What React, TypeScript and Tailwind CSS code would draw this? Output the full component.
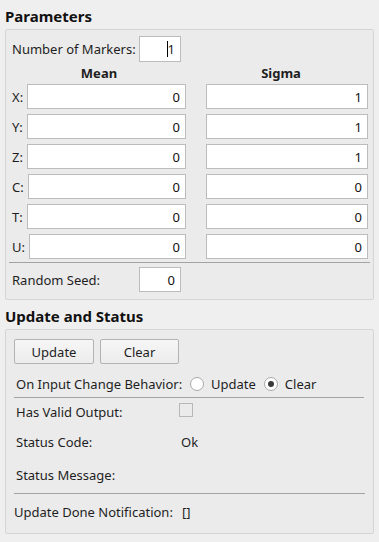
const font = { fontFamily: '"Noto Sans", "Open Sans", sans-serif' };

function NumBox({ value, className = "" }: { value: string; className?: string }) {
  return (
    <div
      className={`flex h-[25px] items-center justify-end border border-[#bcbcbc] bg-white pr-[5px] text-[13px] text-[#111] ${className}`}
    >
      {value}
    </div>
  );
}

function Separator({ className = "" }: { className?: string }) {
  return <div className={`h-px bg-[#a3a3a3] ${className}`} />;
}

function Radio({ label, checked }: { label: string; checked?: boolean }) {
  return (
    <span className="flex items-center gap-[7px]">
      <span className="flex h-[14px] w-[14px] items-center justify-center rounded-full border border-[#a9a9a9] bg-white">
        {checked && <span className="h-[6px] w-[6px] rounded-full bg-[#3a3a3a]" />}
      </span>
      <span>{label}</span>
    </span>
  );
}

const rows = [
  { axis: "X", mean: "0", sigma: "1" },
  { axis: "Y", mean: "0", sigma: "1" },
  { axis: "Z", mean: "0", sigma: "1" },
  { axis: "C", mean: "0", sigma: "0" },
  { axis: "T", mean: "0", sigma: "0" },
  { axis: "U", mean: "0", sigma: "0" },
];

export default function App() {
  return (
    <div
      style={font}
      className="flex h-[542px] w-[379px] flex-col bg-[#efefef] px-[5px] pt-[6px] text-[13px] leading-[20px] text-[#1e1e1e]"
    >
      <h2 className="h-[20px] text-[15px] font-bold leading-[20px] text-[#111]">Parameters</h2>
      <section className="mt-[3px] flex h-[271px] flex-col rounded-[2px] border border-[#d5d5d5] bg-[#ebebeb] pt-[6px]">
        <div className="flex h-[26px] items-center pl-[6px]">
          <span className="w-[127px]">Number of Markers:</span>
          <div className="flex h-[26px] w-[42px] items-center justify-end border border-[#bcbcbc] bg-white pr-[5px]">
            <span className="border-l border-black leading-[16px]">1</span>
          </div>
        </div>

        <div className="mt-[2px] grid grid-cols-2 gap-x-[8px] pl-[6px] pr-[5px]">
          <div className="h-[18px] text-center font-bold leading-[18px]">Mean</div>
          <div className="h-[18px] text-center font-bold leading-[18px]">Sigma</div>
        </div>

        <div className="mt-[2px] flex flex-col gap-[5px] pl-[6px] pr-[5px]">
          {rows.map((r) => (
            <div key={r.axis} className="grid grid-cols-2 gap-x-[8px]">
              <div className="flex items-center gap-[4px]">
                <span>{r.axis}:</span>
                <NumBox value={r.mean} className="flex-1" />
              </div>
              <NumBox value={r.sigma} className="ml-[12px]" />
            </div>
          ))}
        </div>

        <Separator className="mx-[3px] mt-[3px]" />

        <div className="mt-[4px] flex h-[25px] items-center pl-[6px]">
          <span className="w-[127px]">Random Seed:</span>
          <NumBox value="0" className="w-[42px]" />
        </div>
      </section>

      <h2 className="mt-[6px] h-[20px] text-[15px] font-bold leading-[20px] text-[#111]">
        Update and Status
      </h2>
      <section className="mt-[3px] flex h-[205px] flex-col rounded-[2px] border border-[#d5d5d5] bg-[#ebebeb] px-[8px] pt-[9px]">
        <div className="flex gap-[6px]">
          <button className="h-[25px] w-[80px] rounded-[2px] border border-[#b3b3b3] bg-gradient-to-b from-[#f6f6f6] to-[#ececec] text-[#1e1e1e]">
            Update
          </button>
          <button className="h-[25px] w-[79px] rounded-[2px] border border-[#b3b3b3] bg-gradient-to-b from-[#f6f6f6] to-[#ececec] text-[#1e1e1e]">
            Clear
          </button>
        </div>

        <div className="mt-[10px] flex h-[20px] items-center pl-[2px]">
          <span className="w-[174px]">On Input Change Behavior:</span>
          <div className="flex items-center gap-[8px]">
            <Radio label="Update" />
            <Radio label="Clear" checked />
          </div>
        </div>

        <Separator className="mr-[1px] mt-[3px]" />

        <div className="mt-[4px] flex h-[20px] items-center pl-[2px]">
          <span className="w-[163px]">Has Valid Output:</span>
          <span className="mt-[-4px] h-[14px] w-[14px] border border-[#b8b8b8] bg-[#ebebeb]" />
        </div>

        <div className="mt-[10px] flex h-[20px] items-center pl-[2px]">
          <span className="w-[165px]">Status Code:</span>
          <span>Ok</span>
        </div>

        <div className="mt-[13px] flex h-[20px] items-center pl-[2px]">
          <span>Status Message:</span>
        </div>

        <Separator className="mt-[8px]" />

        <div className="mt-[8px] flex h-[20px] items-center">
          <span className="w-[168px]">Update Done Notification:</span>
          <span>[]</span>
        </div>
      </section>
    </div>
  );
}
